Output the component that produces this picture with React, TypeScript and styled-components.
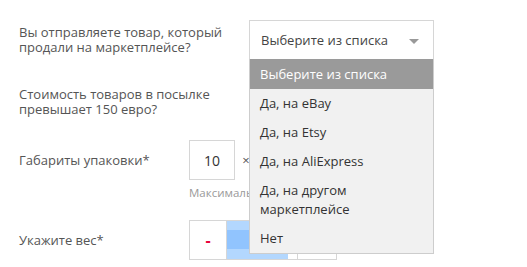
import { FC } from "react";
import styled, { createGlobalStyle } from "styled-components";

const options = [
  "Выберите из списка",
  "Да, на eBay",
  "Да, на Etsy",
  "Да, на AliExpress",
  "Да, на другом маркетплейсе",
  "Нет",
];

const App: FC = () => {
  return (
    <>
      <GlobalStyle />
      <FormStyle>
        <Row $top={20}>
          <Label $width={230}>
            Вы отправляете товар, который продали на маркетплейсе?
          </Label>
          <SelectWrap>
            <SelectBox>
              <span>Выберите из списка</span>
              <Arrow />
            </SelectBox>
            <DropList>
              {options.map((item, i) => (
                <DropItem key={item} $active={i === 0}>
                  {item}
                </DropItem>
              ))}
            </DropList>
          </SelectWrap>
        </Row>

        <Row $top={22}>
          <Label $width={230}>Стоимость товаров в посылке превышает 150 евро?</Label>
          {/* закрыт выпадающим списком */}
          <SelectBox />
        </Row>

        <Row $top={18}>
          <Label $width={170}>Габариты упаковки*</Label>
          <div>
            <SizeGroup>
              <SizeInput>10</SizeInput>
              <Times>×</Times>
              <SizeInput />
            </SizeGroup>
            <Hint>Максимальный размер</Hint>
          </div>
        </Row>

        <Row $top={19}>
          <Label $width={170}>Укажите вес*</Label>
          <Stepper>
            <StepButton $red>-</StepButton>
            <WeightField>
              <Selection />
            </WeightField>
            <StepButton />
          </Stepper>
        </Row>
      </FormStyle>
    </>
  );
};

const GlobalStyle = createGlobalStyle`
  body {
    margin: 0;
    background: #fff;
    font-family: "Open Sans", "Noto Sans", sans-serif;
  }
`;

const FormStyle = styled.div`
  padding-left: 19px;
  width: 508px;
`;

const Row = styled.div<{ $top: number }>`
  display: flex;
  align-items: flex-start;
  margin-top: ${(p) => p.$top}px;
`;

const Label = styled.div<{ $width: number }>`
  width: ${(p) => p.$width}px;
  min-height: 40px;
  display: flex;
  align-items: center;
  padding-right: 20px;
  box-sizing: border-box;
  font-size: 13px;
  line-height: 15px;
  color: #555;
`;

const SelectWrap = styled.div`
  position: relative;
  width: 185px;
`;

const SelectBox = styled.div`
  width: 185px;
  height: 40px;
  box-sizing: border-box;
  border: 1px solid #d6d6d6;
  background: #fff;
  display: flex;
  align-items: center;
  justify-content: space-between;
  padding: 0 14px 0 11px;
  font-size: 13px;
  color: #444;
`;

const Arrow = styled.i`
  width: 0;
  height: 0;
  border-left: 5px solid transparent;
  border-right: 5px solid transparent;
  border-top: 5px solid #999;
  margin-top: 2px;
`;

const DropList = styled.div`
  position: absolute;
  top: 39px;
  left: 0;
  right: 0;
  z-index: 10;
  background: #f1f1f1;
  border: 1px solid #cdcdcd;
  border-top: none;
`;

const DropItem = styled.div<{ $active?: boolean }>`
  padding: 5px 10px;
  line-height: 19px;
  font-size: 13px;
  background: ${(p) => (p.$active ? "#9a9a9a" : "transparent")};
  color: ${(p) => (p.$active ? "#fff" : "#333")};

  &:first-child {
    padding: 6px 10px 5px;
  }
`;

const SizeGroup = styled.div`
  display: flex;
  align-items: center;
`;

const SizeInput = styled.div`
  width: 46px;
  height: 40px;
  box-sizing: border-box;
  border: 1px solid #d6d6d6;
  display: flex;
  align-items: center;
  justify-content: center;
  font-size: 14px;
  color: #333;
`;

const Times = styled.span`
  width: 22px;
  text-align: center;
  font-size: 13px;
  color: #555;
`;

const Hint = styled.div`
  margin-top: 5px;
  font-size: 11.5px;
  line-height: 16px;
  color: #9a9a9a;
`;

const Stepper = styled.div`
  display: flex;
  height: 40px;
`;

const StepButton = styled.div<{ $red?: boolean }>`
  width: 38px;
  box-sizing: border-box;
  border: 1px solid #d6d6d6;
  display: flex;
  align-items: center;
  justify-content: center;
  font-size: 16px;
  font-weight: 700;
  color: ${(p) => (p.$red ? "#e8063c" : "#333")};
  background: #fff;

  &:last-child {
    width: 40px;
  }
`;

const WeightField = styled.div`
  width: 70px;
  box-sizing: border-box;
  border-top: 1px solid #d6d6d6;
  border-bottom: 1px solid #d6d6d6;
  display: flex;
`;

const Selection = styled.div`
  width: 61px;
  height: 100%;
  background: linear-gradient(
    #b3d7fe 0,
    #b3d7fe 9px,
    #91c4fe 9px,
    #91c4fe 28px,
    #b3d7fe 28px
  );
`;

export default App;
